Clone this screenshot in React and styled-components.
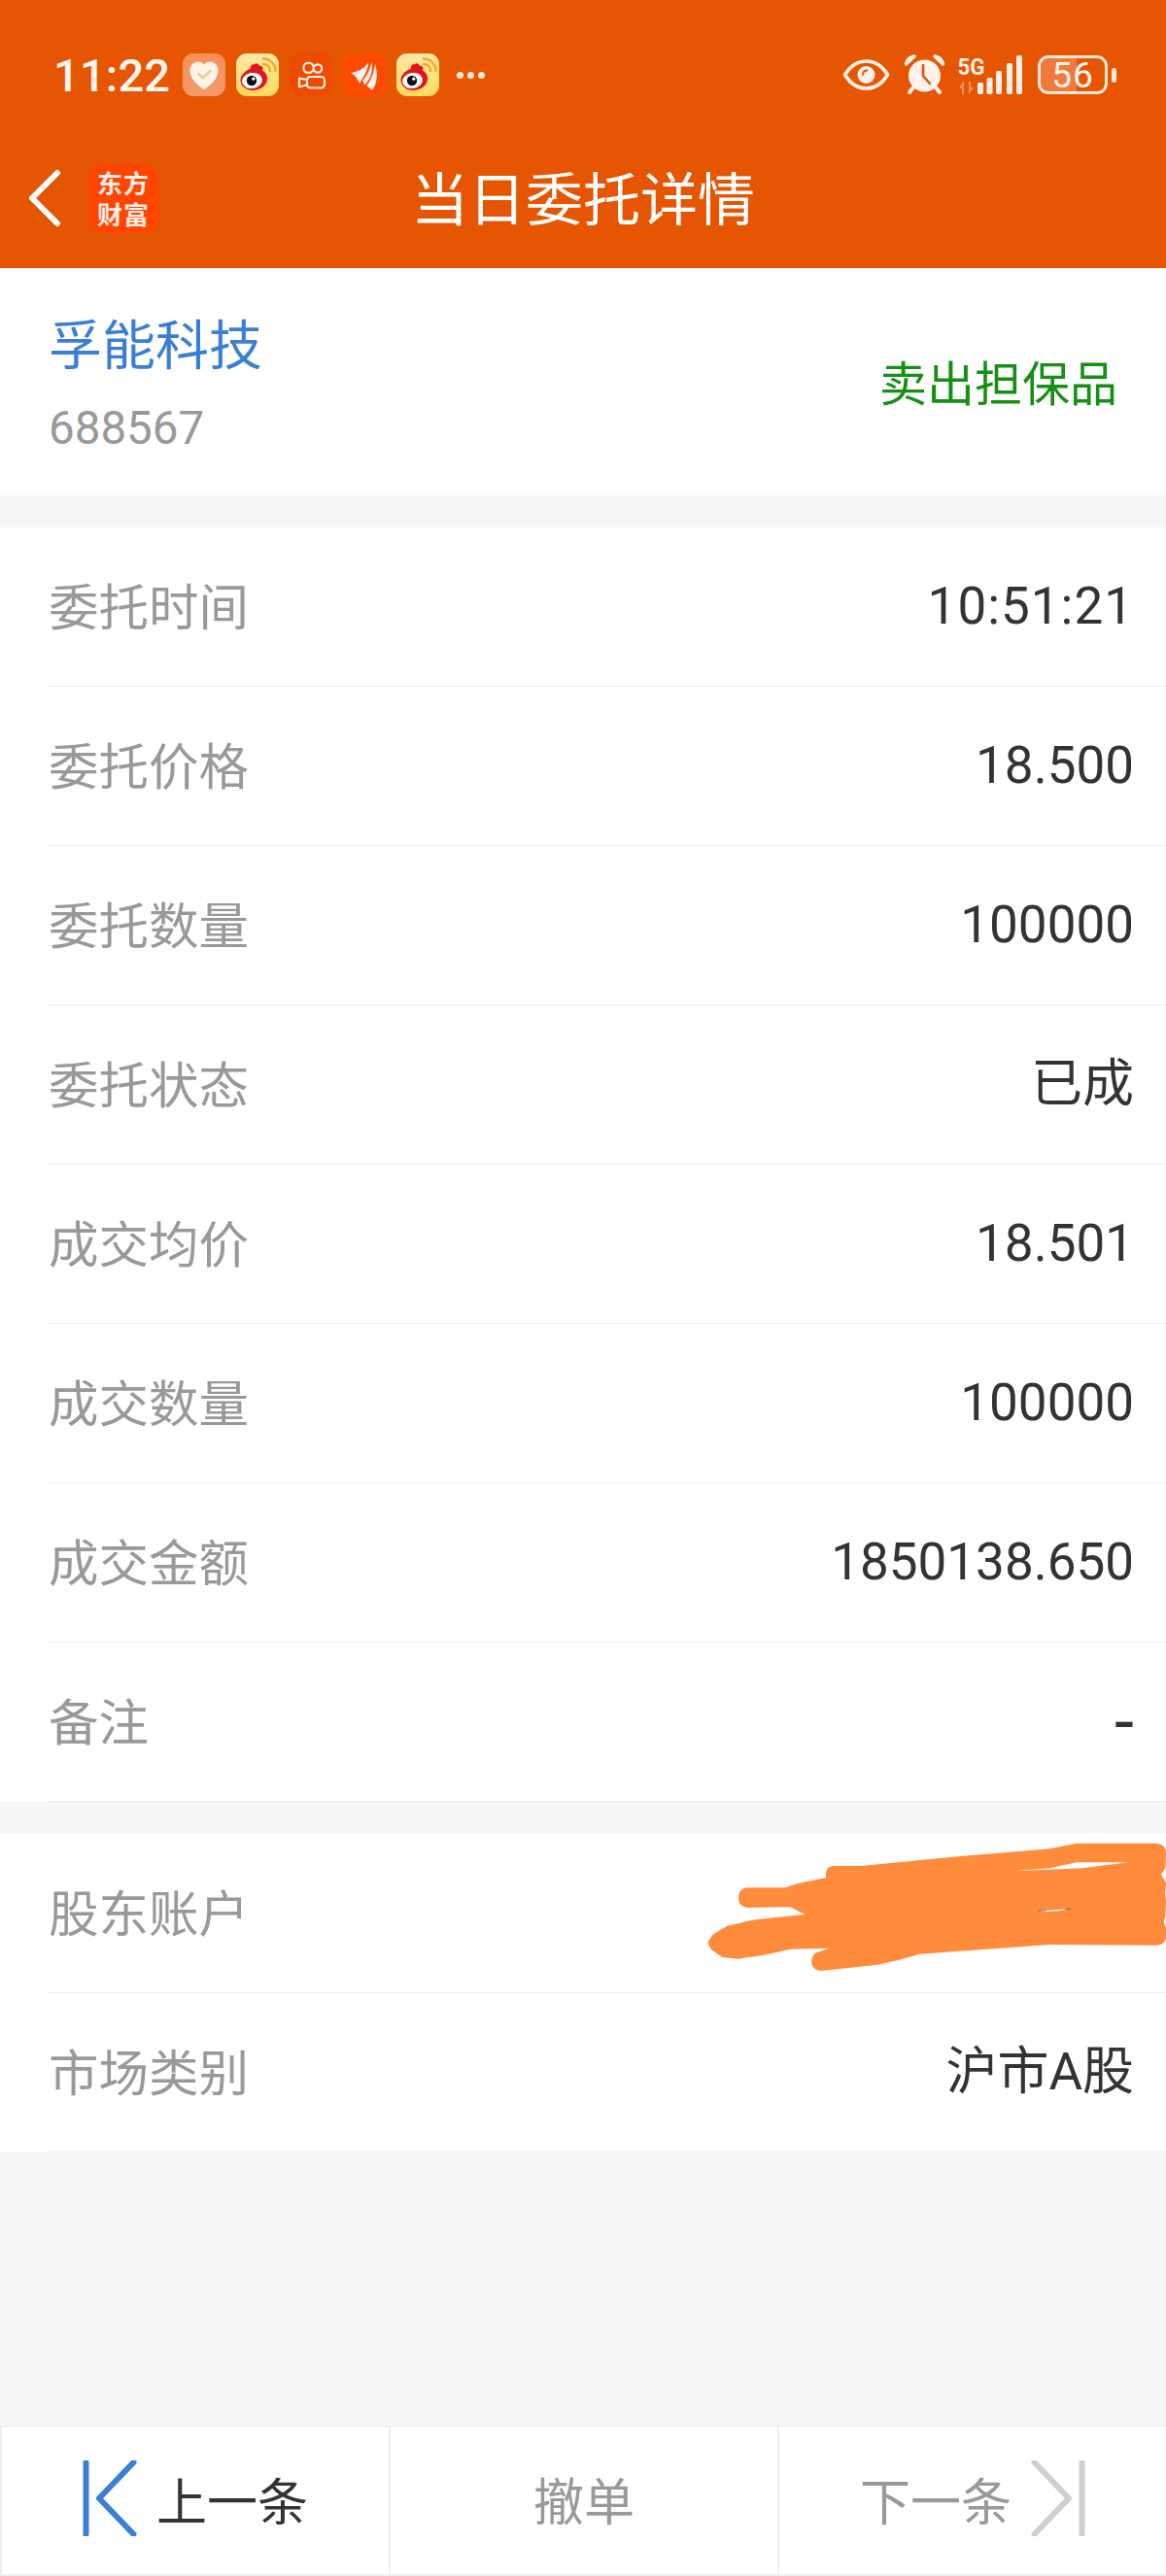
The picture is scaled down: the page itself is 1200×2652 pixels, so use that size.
import React from "react";
import styled, { createGlobalStyle } from "styled-components";

const CJK = `"Noto Sans CJK SC", "Noto Sans", sans-serif`;
const NUM = `Roboto, "Noto Sans CJK SC", sans-serif`;

const Global = createGlobalStyle`
  html, body { margin: 0; padding: 0; background: #f6f7f9; }
  * { box-sizing: border-box; }
`;

const Page = styled.div`
  width: 1200px;
  height: 2652px;
  display: flex;
  flex-direction: column;
  background: #f6f7f9;
  font-family: ${CJK};
`;

const Header = styled.header`
  background: #e65602;
  color: #fff;
`;

const StatusBar = styled.div`
  height: 154px;
  display: flex;
  align-items: center;
  padding: 0 51px 0 55px;
`;

const Clock = styled.span`
  font: 500 47px/1 ${NUM};
  color: #fff5ee;
  letter-spacing: 0.2px;
  width: 133px;
`;

const AppIcons = styled.div`
  display: flex;
  align-items: center;
  gap: 11px;
`;

const Dots = styled.div`
  display: flex;
  gap: 4px;
  margin-left: 18px;
  span {
    width: 7px;
    height: 7px;
    border-radius: 50%;
    background: #ffeadd;
  }
`;

const SystemIcons = styled.div`
  margin-left: auto;
  display: flex;
  align-items: center;
`;

const Glyph = styled.svg`
  display: block;
  flex: none;
  margin-left: ${(p) => p.$ml || 0}px;
`;

const Battery = styled.div`
  margin-left: 16px;
  display: flex;
  align-items: center;
  gap: 4px;
`;

const BatteryBody = styled.div`
  width: 72px;
  height: 40px;
  border: 3.5px solid #ffe8da;
  border-radius: 11px;
  background: linear-gradient(90deg, #ef7a3d 56%, transparent 56%);
  display: flex;
  align-items: center;
  justify-content: center;
  font: 400 37px/1 ${NUM};
  color: #fff4ec;
  letter-spacing: 1px;
`;

const BatteryNub = styled.div`
  width: 5px;
  height: 15px;
  border-radius: 3px;
  background: #ffe8da;
`;

const NavBar = styled.div`
  height: 122px;
  padding: 0 29px 22px;
  display: grid;
  grid-template-columns: 1fr auto 1fr;
  align-items: center;
`;

const NavLeft = styled.div`
  display: flex;
  align-items: center;
  gap: 28px;
`;

const Logo = styled.div`
  width: 72px;
  height: 71px;
  border-radius: 15px;
  background: #ff4500;
  color: #ffeee6;
  display: flex;
  align-items: center;
  justify-content: center;
  text-align: center;
  font-size: 26px;
  font-weight: 700;
  letter-spacing: 1px;
  line-height: 32px;
`;

const Title = styled.h1`
  margin: 0 0 6px;
  font-size: 59px;
  font-weight: 400;
  line-height: 1;
  color: #fff;
`;

const StockCard = styled.section`
  height: 234px;
  padding: 43px 50px 0;
  display: flex;
  justify-content: space-between;
  background: #fff;
`;

const StockInfo = styled.div`
  display: flex;
  flex-direction: column;
  gap: 28px;
`;

const StockName = styled.div`
  font-size: 55px;
  line-height: 64px;
  color: #3a7fd5;
`;

const StockCode = styled.div`
  font: 400 47.5px/60px ${NUM};
  color: #999;
`;

const Side = styled.div`
  align-self: center;
  margin-top: -46px;
  font-size: 49px;
  color: #159015;
`;

const Section = styled.section`
  position: relative;
  margin-top: 33px;
  background: #fff;
`;

const Row = styled.div`
  height: 164px;
  margin-left: 48px;
  padding: 0 33px 0 2px;
  display: flex;
  align-items: center;
  justify-content: space-between;
  border-bottom: 1px solid #eeeeef;
`;

const Label = styled.span`
  font-size: 51.5px;
  line-height: 1.2;
  margin-bottom: 5px;
  color: #999;
`;

const Value = styled.span`
  font: 400 ${(p) => (p.$dash ? 72 : 53)}px/1 ${NUM};
  letter-spacing: ${(p) => (p.$time ? 1 : 0)}px;
  color: #333;
`;

const Scribble = styled.svg`
  position: absolute;
  right: 0;
  top: -28px;
`;

const BottomBar = styled.footer`
  margin-top: auto;
  height: 155px;
  display: grid;
  grid-template-columns: 400px 400px 400px;
  background: #fff;
  border-top: 1px solid #e9eaec;
  border-bottom: 2px solid #eeeff1;
`;

const BarButton = styled.div`
  display: flex;
  align-items: center;
  justify-content: center;
  gap: ${(p) => (p.$gap ? p.$gap : 0)}px;
  font-size: 52px;
  padding-bottom: 4px;
  color: ${(p) => (p.$active ? "#333" : "#999")};
  border-left: 2px solid #eeeff1;
`;

const Heart = () => (
  <svg width="44" height="44" viewBox="0 0 44 44">
    <defs>
      <linearGradient id="hg" x1="0" y1="0" x2="0" y2="1">
        <stop offset="0" stopColor="#f88f58" />
        <stop offset="1" stopColor="#f49a6a" />
      </linearGradient>
    </defs>
    <rect width="44" height="44" rx="11" fill="url(#hg)" />
    <path d="M22 37C15 33 7.5 26 7.5 17.5C7.5 12 11.5 8.5 16 8.5C18.5 8.5 20.7 9.7 22 11.5C23.3 9.7 25.5 8.5 28 8.5C32.5 8.5 36.5 12 36.5 17.5C36.5 26 29 33 22 37Z" fill="#fff4ea" />
    <path d="M16.5 21L20.8 25.3L28.5 18" fill="none" stroke="#f0c9a0" strokeWidth="2.6" strokeLinecap="round" strokeLinejoin="round" />
  </svg>
);

const Weibo = ({ id }) => (
  <svg width="44" height="44" viewBox="0 0 44 44">
    <defs>
      <linearGradient id={id} x1="0" y1="0" x2="0" y2="1">
        <stop offset="0" stopColor="#ffe9a6" />
        <stop offset="1" stopColor="#ffd95a" />
      </linearGradient>
    </defs>
    <rect width="44" height="44" rx="11" fill={`url(#${id})`} />
    <path d="M4.5 27C5 21 11 17 15 15.5C14.5 13 16 10.5 18.5 11.5C20 9.5 23 10 23.5 12.5C26.5 12 28.5 14.5 27 17.5C30 19 32 22 32 26C32 33 25 38 17 38C10 38 4.5 33.5 4.5 27Z" fill="#e0161e" />
    <ellipse cx="16.5" cy="28" rx="10.5" ry="8" fill="#fff" transform="rotate(-8 16.5 28)" />
    <circle cx="16" cy="28" r="5.2" fill="#111" />
    <circle cx="17.8" cy="26.2" r="1.6" fill="#fff" />
    <path d="M28 11C32 11 35 14 35 18" fill="none" stroke="#f2a91f" strokeWidth="2.4" strokeLinecap="round" />
    <path d="M28 5.5C35 5.5 40.5 11 40.5 18" fill="none" stroke="#f2a91f" strokeWidth="2.4" strokeLinecap="round" />
  </svg>
);

const Kuaishou = () => (
  <svg width="44" height="44" viewBox="0 0 44 44">
    <rect width="44" height="44" rx="11" fill="#ee4a00" />
    <g fill="none" stroke="#ffeee4" strokeWidth="2.2" strokeLinejoin="round">
      <circle cx="19.5" cy="14.8" r="5.2" />
      <circle cx="29" cy="15.5" r="4.2" />
      <rect x="18" y="24" width="18" height="11.5" rx="3.5" />
      <path d="M17.5 27L10 25.5V34.5L17.5 32.5" />
    </g>
  </svg>
);

const Fan = () => (
  <svg width="44" height="44" viewBox="0 0 44 44">
    <rect width="44" height="44" rx="11" fill="#ff4a00" />
    <g fill="#fff2ea">
      <path d="M8 20C15 19 22 15.5 26 9.5C26.5 15 22.5 22 17 31C15 26 12.5 22.5 8 20Z" />
      <path d="M29.5 9C31 17 29 25 22.5 32.5C21 30 20.5 28 20.5 28C25 22 28 16 29.5 9Z" />
      <path d="M33 11C36 20 35.5 31 30 38C27.5 36 25.5 34 24.5 33C30 26 32 18 33 11Z" />
    </g>
  </svg>
);

const BackArrow = () => (
  <svg width="34" height="60" viewBox="0 0 34 60">
    <path d="M30 4L4 30L30 56" fill="none" stroke="#fff" strokeWidth="6" strokeLinecap="round" strokeLinejoin="round" />
  </svg>
);

const Eye = () => (
  <Glyph width="49" height="34" viewBox="0 0 49 34">
    <path d="M2.5 17C8 8 15.5 3 24.5 3C33.5 3 41 8 46.5 17C41 26 33.5 31 24.5 31C15.5 31 8 26 2.5 17Z" fill="none" stroke="#fff1e8" strokeWidth="3.6" strokeLinejoin="round" />
    <circle cx="24.5" cy="17" r="9" fill="#fff1e8" />
    <path d="M21 17C21 14 23 12.5 25.5 12.5" fill="none" stroke="#e65602" strokeWidth="1.8" strokeLinecap="round" />
  </Glyph>
);

const Alarm = () => (
  <Glyph $ml={15} width="41" height="42" viewBox="0 0 41 42">
    <circle cx="20.5" cy="22" r="16.5" fill="#fff3ec" />
    <path d="M1.5 10C2.5 5.5 6 2.5 10 2L1.5 10Z" fill="none" stroke="#fff3ec" strokeWidth="3.4" strokeLinejoin="round" />
    <path d="M39.5 10C38.5 5.5 35 2.5 31 2L39.5 10Z" fill="none" stroke="#fff3ec" strokeWidth="3.4" strokeLinejoin="round" />
    <path d="M9 34L5 39M32 34L36 39" stroke="#fff3ec" strokeWidth="4" strokeLinecap="round" />
    <path d="M19 11V22L26 30" fill="none" stroke="#e65602" strokeWidth="2.6" strokeLinecap="round" strokeLinejoin="round" />
  </Glyph>
);

const Signal = () => (
  <Glyph $ml={14} width="66" height="42" viewBox="0 0 66 42">
    <text x="-0.5" y="21" fontFamily="Roboto, sans-serif" fontWeight="700" fontSize="24" fill="#ffeee4" textLength="28" lengthAdjust="spacingAndGlyphs">5G</text>
    <path d="M5 28L1 35H4V41H6V28ZM11 41L16 34H13V28H11V41Z" fill="#f5915c" />
    {[
      [20, 29],
      [29.5, 24],
      [39, 17],
      [50, 9],
      [60, 1],
    ].map(([x, y]) => (
      <rect key={x} x={x} y={y} width="6" height={41 - y} rx="1.8" fill="#ffeee4" />
    ))}
  </Glyph>
);

const ScribbleMark = () => (
  <Scribble width="520" height="180" viewBox="0 0 1560 540">
    <path
      fillRule="evenodd"
      fill="#ff8c3c"
      d="M510 205Q512 183 535 183L620 183L900 155L1200 130L1285 113L1530 113Q1560 115 1560 145L1558 190L1545 210L1560 235L1557 270L1560 290L1558 340L1553 355L1560 375L1560 405Q1555 428 1530 428L1200 426L800 455L730 475L670 488L495 507Q465 505 465 478Q468 450 490 448L520 437L400 440L320 458L240 470L190 465L155 440L145 420L160 395L205 368L290 349L445 333L400 310L270 312Q240 310 240 282Q240 252 270 250L385 250L420 238L510 219Z M1090 199L1200 190L1285 172L1445 172L1300 190Z M1165 322L1265 316L1230 322L1180 325Z"
    />
    <path d="M1165 322L1190 321M1250 316L1265 316" stroke="#5a3a20" strokeWidth="2" />
  </Scribble>
);

const PrevIcon = () => (
  <svg width="56" height="78" viewBox="0 0 56 78">
    <path d="M3.5 2V76" stroke="#3a7fd5" strokeWidth="6" strokeLinecap="round" />
    <path d="M52.5 2L17 39L52.5 76" fill="none" stroke="#3a7fd5" strokeWidth="6" strokeLinecap="round" strokeLinejoin="round" />
  </svg>
);

const NextIcon = () => (
  <svg width="56" height="78" viewBox="0 0 56 78">
    <path d="M3.5 2L39 39L3.5 76" fill="none" stroke="#cfcfcf" strokeWidth="6" strokeLinecap="round" strokeLinejoin="round" />
    <path d="M52.5 2V76" stroke="#cfcfcf" strokeWidth="6" strokeLinecap="round" />
  </svg>
);

const orderRows = [
  ["委托时间", "10:51:21"],
  ["委托价格", "18.500"],
  ["委托数量", "100000"],
  ["委托状态", "已成"],
  ["成交均价", "18.501"],
  ["成交数量", "100000"],
  ["成交金额", "1850138.650"],
  ["备注", "-"],
];

export default function App() {
  return (
    <Page>
      <Global />
      <Header>
        <StatusBar>
          <Clock>11:22</Clock>
          <AppIcons>
            <Heart />
            <Weibo id="wb1" />
            <Kuaishou />
            <Fan />
            <Weibo id="wb2" />
          </AppIcons>
          <Dots>
            <span />
            <span />
            <span />
          </Dots>
          <SystemIcons>
            <Eye />
            <Alarm />
            <Signal />
            <Battery>
              <BatteryBody>56</BatteryBody>
              <BatteryNub />
            </Battery>
          </SystemIcons>
        </StatusBar>
        <NavBar>
          <NavLeft>
            <BackArrow />
            <Logo>
              东方
              <br />
              财富
            </Logo>
          </NavLeft>
          <Title>当日委托详情</Title>
          <div />
        </NavBar>
      </Header>

      <StockCard>
        <StockInfo>
          <StockName>孚能科技</StockName>
          <StockCode>688567</StockCode>
        </StockInfo>
        <Side>卖出担保品</Side>
      </StockCard>

      <Section>
        {orderRows.map(([label, value]) => (
          <Row key={label}>
            <Label>{label}</Label>
            <Value $dash={value === "-"} $time={value.includes(":")}>{value}</Value>
          </Row>
        ))}
      </Section>

      <Section>
        <Row>
          <Label>股东账户</Label>
        </Row>
        <Row>
          <Label>市场类别</Label>
          <Value>沪市A股</Value>
        </Row>
        <ScribbleMark />
      </Section>

      <BottomBar>
        <BarButton $active $gap={20}>
          <PrevIcon />
          上一条
        </BarButton>
        <BarButton>撤单</BarButton>
        <BarButton $gap={20}>
          下一条
          <NextIcon />
        </BarButton>
      </BottomBar>
    </Page>
  );
}
